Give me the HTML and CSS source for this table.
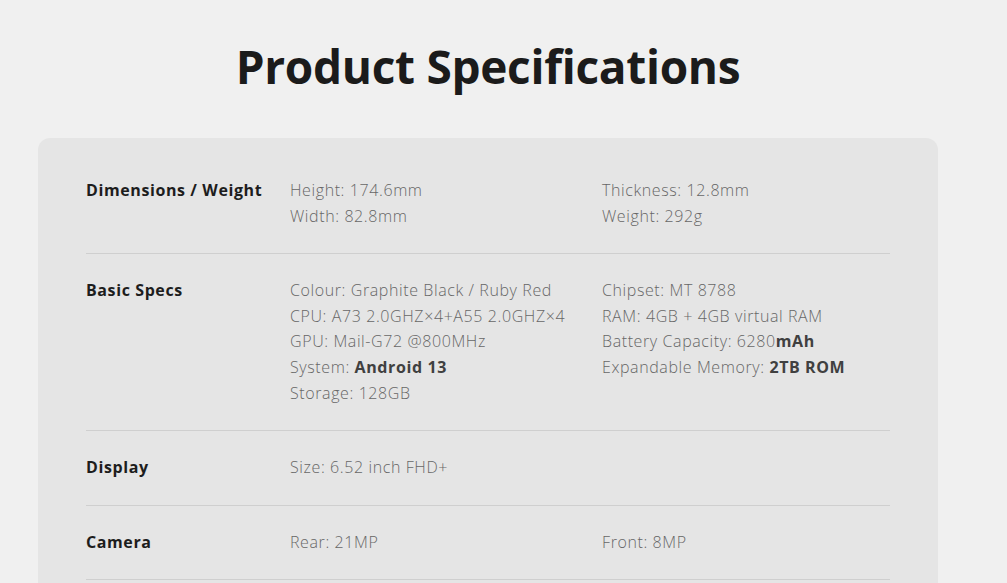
FILE: index.html
```html
<!DOCTYPE html>
<html lang="en">
<head>
<meta charset="utf-8">
<title>Product Specifications</title>
<link rel="stylesheet" href="styles.css">
</head>
<body>
<main class="page">
  <h1 class="title">Product Specifications</h1>
  <section class="card">
    <div class="row">
      <div class="label">Dimensions / Weight</div>
      <div class="col"><p>Height: 174.6mm</p><p>Width: 82.8mm</p></div>
      <div class="col"><p>Thickness: 12.8mm</p><p>Weight: 292g</p></div>
    </div>
    <div class="row">
      <div class="label">Basic Specs</div>
      <div class="col">
        <p>Colour: Graphite Black / Ruby Red</p>
        <p>CPU: A73 2.0GHZ×4+A55 2.0GHZ×4</p>
        <p>GPU: Mail-G72 @800MHz</p>
        <p>System: <strong>Android 13</strong></p>
        <p>Storage: 128GB</p>
      </div>
      <div class="col">
        <p>Chipset: MT 8788</p>
        <p>RAM: 4GB + 4GB virtual RAM</p>
        <p>Battery Capacity: 6280<strong>mAh</strong></p>
        <p>Expandable Memory: <strong>2TB ROM</strong></p>
      </div>
    </div>
    <div class="row">
      <div class="label">Display</div>
      <div class="col"><p>Size: 6.52 inch FHD+</p></div>
      <div class="col"></div>
    </div>
    <div class="row">
      <div class="label">Camera</div>
      <div class="col"><p>Rear: 21MP</p></div>
      <div class="col"><p>Front: 8MP</p></div>
    </div>
  </section>
</main>
</body>
</html>
```

FILE: styles.css
```css
html, body {
  margin: 0;
  padding: 0;
  background: #f0f0f0;
}

body {
  font-family: "Open Sans", "Liberation Sans", sans-serif;
  color: #666666;
}

.page {
  width: 900px;
  margin-left: 38px;
  padding-top: 38px;
}

.title {
  margin: 0 0 44px;
  text-align: center;
  font-size: 46px;
  line-height: 56px;
  font-weight: 700;
  color: #1b1b1b;
  letter-spacing: -0.3px;
}

.card {
  background: #e5e5e5;
  border-radius: 12px;
  padding: 16px 48px 40px;
}

.row {
  display: grid;
  grid-template-columns: 204px 312px 1fr;
  padding: 24px 0;
  border-bottom: 1px solid #cfcfcf;
  font-size: 16px;
  line-height: 25.6px;
  letter-spacing: 0.6px;
}

.label {
  font-weight: 700;
  color: #1d1d1d;
}

.col p {
  margin: 0;
  font-weight: 300;
  color: #676767;
}

.col strong {
  font-weight: 700;
  color: #404040;
}
```
